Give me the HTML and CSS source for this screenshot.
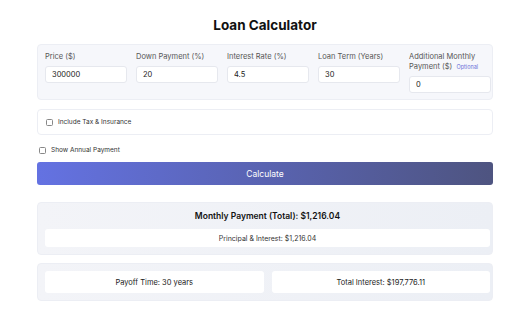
FILE: index.html
```html
<!DOCTYPE html>
<html lang="en">
<head>
    <meta charset="UTF-8" />
    <meta name="viewport" content="width=device-width, initial-scale=1.0" />
    <title>Loan Calculator</title>
    <link rel="stylesheet" href="styles.css">
</head>
<body>
    <main class="calculator">
        <h1 class="title">Loan Calculator</h1>

        <section class="card inputs">
            <div class="field">
                <label for="price">Price ($)</label>
                <input type="text" id="price" value="300000">
            </div>
            <div class="field">
                <label for="down">Down Payment (%)</label>
                <input type="text" id="down" value="20">
            </div>
            <div class="field">
                <label for="rate">Interest Rate (%)</label>
                <input type="text" id="rate" value="4.5">
            </div>
            <div class="field">
                <label for="term">Loan Term (Years)</label>
                <input type="text" id="term" value="30">
            </div>
            <div class="field">
                <label for="extra">Additional Monthly Payment ($) <span class="optional">Optional</span></label>
                <input type="text" id="extra" value="0">
            </div>
        </section>

        <section class="card options">
            <label class="check"><input type="checkbox">Include Tax &amp; Insurance</label>
        </section>

        <label class="check annual"><input type="checkbox">Show Annual Payment</label>

        <button class="calc-btn">Calculate</button>

        <section class="card result">
            <p class="total">Monthly Payment (Total): $1,216.04</p>
            <div class="box">Principal &amp; Interest: $1,216.04</div>
        </section>

        <section class="card result summary">
            <div class="box">Payoff Time: 30 years</div>
            <div class="box">Total Interest: $197,776.11</div>
        </section>
    </main>
</body>
</html>
```

FILE: styles.css
```css
body {
    margin: 0;
    background-color: #fff;
    font-family: Inter, 'Noto Sans', sans-serif;
    color: #222;
}

.calculator {
    width: 456px;
    margin-left: 37px;
    padding-top: 16px;
}

.title {
    margin: 0 0 10px;
    text-align: center;
    font-size: 13.5px;
    font-weight: 700;
    line-height: 18px;
    color: #111;
}

.card {
    background-color: #f6f7fb;
    border: 1px solid #eceef4;
    border-radius: 4px;
    box-sizing: border-box;
}

.inputs {
    display: grid;
    grid-template-columns: repeat(5, 82px);
    column-gap: 9px;
    padding: 7px 0 6px 7px;
    height: 56px;
}

.field {
    display: flex;
    flex-direction: column;
}

.field label {
    font-size: 7.5px;
    line-height: 10px;
    color: #555;
    margin-bottom: 4px;
}

.optional {
    display: inline-block;
    font-size: 5.5px;
    line-height: 7px;
    color: #6a6fd8;
    margin-left: 2px;
}

.field input {
    height: 17px;
    box-sizing: border-box;
    border: 1px solid #e6e8ee;
    border-radius: 3px;
    background-color: #fff;
    padding: 0 6px;
    font-family: inherit;
    font-size: 7.5px;
    color: #222;
    outline: none;
}

.options {
    margin-top: 9px;
    height: 26px;
    background-color: #fff;
    padding: 0 8px;
    display: flex;
    align-items: center;
}

.check {
    display: flex;
    align-items: center;
    font-size: 6.5px;
    color: #333;
}

.check input {
    appearance: none;
    margin: 0 5px 0 0;
    width: 7px;
    height: 7px;
    border: 1px solid #888;
    border-radius: 1.5px;
    background-color: #fff;
}

.annual {
    margin: 11px 0 0 2px;
    height: 8px;
}

.calc-btn {
    display: block;
    width: 100%;
    height: 23px;
    margin-top: 8px;
    border: none;
    border-radius: 3px;
    background: linear-gradient(90deg, #6472e2, #4e5480);
    color: #fff;
    font-family: inherit;
    font-size: 8.5px;
    cursor: pointer;
}

.result {
    margin-top: 17px;
    background: linear-gradient(90deg, #f3f4f8, #eceff5);
    padding: 7px 2px 7px 7px;
}

.total {
    margin: 0 0 6px;
    text-align: center;
    font-size: 8.5px;
    font-weight: 600;
    line-height: 13px;
    color: #111;
}

.box {
    background-color: #fff;
    border-radius: 3px;
    height: 18px;
    display: flex;
    align-items: center;
    justify-content: center;
    font-size: 7px;
    color: #333;
}

.summary {
    margin-top: 8px;
    display: grid;
    grid-template-columns: 1fr 1fr;
    column-gap: 8px;
}

.summary .box {
    height: 22px;
    font-size: 7.5px;
    color: #222;
}
```
